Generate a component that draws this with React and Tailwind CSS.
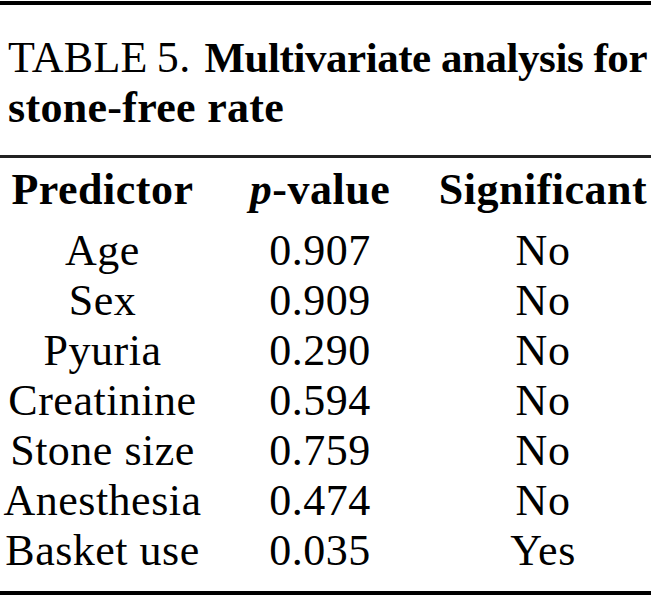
export default function App() {
  const rows = [
    ["Age", "0.907", "No"],
    ["Sex", "0.909", "No"],
    ["Pyuria", "0.290", "No"],
    ["Creatinine", "0.594", "No"],
    ["Stone size", "0.759", "No"],
    ["Anesthesia", "0.474", "No"],
    ["Basket use", "0.035", "Yes"],
  ];
  return (
    <div className="w-[651px] h-[595px] bg-white text-black overflow-hidden flex flex-col" style={{ fontFamily: '"Liberation Serif", serif' }}>
      <div className="mt-px h-[4px] bg-black" />
      <div className="pl-[8px] pt-[28px] text-[44px] leading-[50px] whitespace-nowrap">
        <div className="flex">
          <span className="tracking-[0.3px]">TABLE{"\u2009"}5.</span>
          <span className="font-bold ml-[14px] text-[43px] tracking-[-0.45px]">Multivariate analysis for</span>
        </div>
        <div className="font-bold tracking-[0.3px]">stone-free rate</div>
      </div>
      <div className="mt-[22px] h-[2.5px] bg-[#222]" />
      <div className="text-[44px] leading-[50px] pt-[7px] tracking-[0.5px]">
        <div className="grid grid-cols-[205px_230px_216px] font-bold">
          <div className="text-center">Predictor</div>
          <div className="text-center">
            <span className="italic">p</span>-value
          </div>
          <div className="text-center">Significant</div>
        </div>
        <div className="mt-[11px]">
          {rows.map((r) => (
            <div key={r[0]} className="grid grid-cols-[205px_230px_216px]">
              <div className="text-center">{r[0]}</div>
              <div className="text-center">{r[1]}</div>
              <div className="text-center">{r[2]}</div>
            </div>
          ))}
        </div>
      </div>
      <div className="mt-auto h-[4px] bg-black" />
    </div>
  );
}
